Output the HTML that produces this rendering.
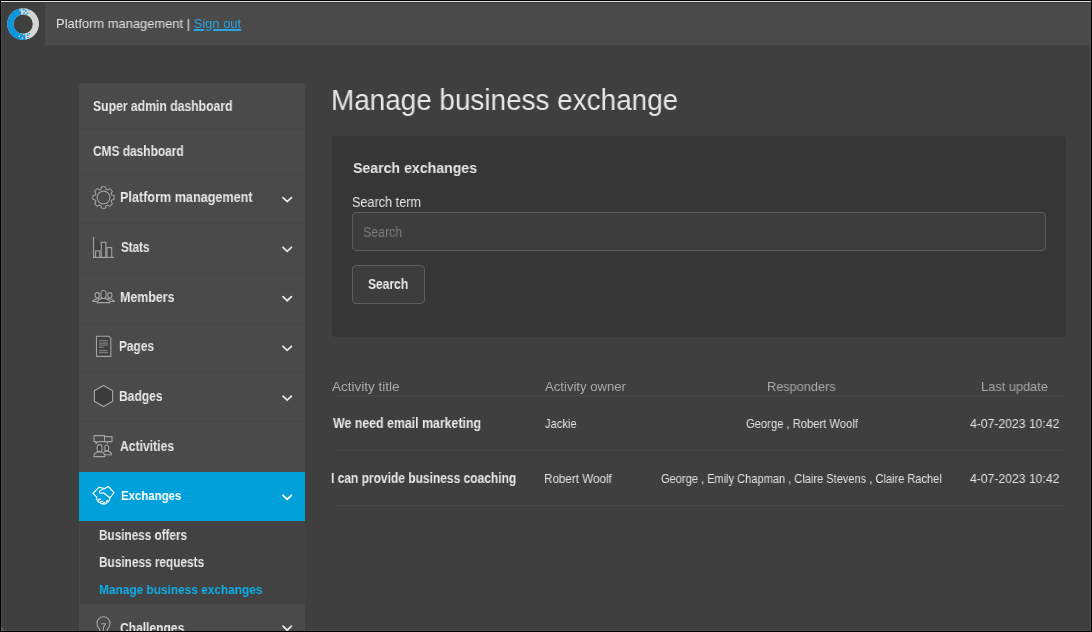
<!DOCTYPE html>
<html><head><meta charset="utf-8">
<style>
html,body{margin:0;padding:0;width:1092px;height:632px;overflow:hidden;background:#000;}
body{position:relative;font-family:"Liberation Sans",sans-serif;color:#e4e4e4;}
.a{position:absolute;}
.t{position:absolute;white-space:nowrap;line-height:1;will-change:transform;}
.b{font-weight:700;}
.sb{font-size:12.5px;font-weight:700;color:#e8e8e8;}
.sep{position:absolute;left:79px;width:226px;height:1px;background:#464646;}
.th{font-size:13px;color:#a9a9a9;}
.td{font-size:12px;color:#e2e2e2;}
.tsep{position:absolute;left:332px;width:734px;height:1px;background:#454545;}
svg.a{overflow:visible;}
</style></head>
<body>
<!-- window background -->
<div class="a" style="left:1px;top:1px;width:1090px;height:630px;background:#3f3f3f;"></div>
<!-- header -->
<div class="a" style="left:45px;top:2px;width:1045px;height:43px;background:#4a4a4a;"></div>
<div class="a" style="left:45px;top:45px;width:1045px;height:1px;background:#444;"></div>
<!-- frame lines -->
<div class="a" style="left:1px;top:1px;width:1090px;height:1px;background:#e3e3e3;"></div>
<div class="a" style="left:1px;top:2px;width:1089px;height:1px;background:#383838;"></div>
<div class="a" style="left:1px;top:2px;width:1px;height:629px;background:#4b4b4b;"></div>
<div class="a" style="left:1090px;top:2px;width:1px;height:629px;background:#4b4b4b;"></div>
<div class="a" style="left:1px;top:630px;width:1090px;height:1px;background:#4b4b4b;"></div>

<!-- logo -->
<svg class="a" style="left:0;top:0" width="46" height="46" viewBox="0 0 46 46">
  <circle cx="23.1" cy="24.1" r="12.8" fill="none" stroke="#d5d5d5" stroke-width="6.2"/>
  <path d="M20.88 11.49 A12.8 12.8 0 0 0 25.32 36.71" fill="none" stroke="#0b95da" stroke-width="6.2"/>
  <g fill="#0b95da">
    <rect x="22.6" y="8.6" width="1.8" height="1.8"/><rect x="25" y="10" width="1.6" height="1.6"/>
    <rect x="23.4" y="12.4" width="1.5" height="1.5"/><rect x="26.8" y="12.6" width="1.4" height="1.4"/>
    <rect x="28.6" y="9.4" width="1.2" height="1.2"/><rect x="25.6" y="14.2" width="1.2" height="1.2"/>
    <rect x="26.8" y="34.4" width="1.6" height="1.6"/><rect x="28.8" y="33.2" width="1.3" height="1.3"/>
    <rect x="27.4" y="37" width="1.3" height="1.3"/>
  </g>
  <g fill="#d5d5d5">
    <rect x="19.4" y="9.6" width="1.3" height="1.3"/><rect x="21" y="13" width="1.2" height="1.2"/>
    <rect x="18.6" y="35.6" width="1.4" height="1.4"/><rect x="21.6" y="37.2" width="1.6" height="1.6"/>
    <rect x="23" y="34" width="1.3" height="1.3"/><rect x="20.4" y="33.2" width="1.1" height="1.1"/>
  </g>
</svg>

<!-- sidebar -->
<div class="a" style="left:79px;top:83px;width:226px;height:548px;background:#4a4a4a;border-radius:4px 4px 0 0;"></div>
<div class="sep" style="top:128px"></div>
<div class="sep" style="top:174px"></div>
<div class="sep" style="top:223px"></div>
<div class="sep" style="top:273px"></div>
<div class="sep" style="top:323px"></div>
<div class="sep" style="top:372px"></div>
<div class="sep" style="top:421px"></div>
<div class="a" style="left:79px;top:472px;width:226px;height:49px;background:#00a0da;"></div>
<div class="a" style="left:79px;top:521px;width:226px;height:83px;background:#424242;"></div>
<div class="a" style="left:79px;top:521px;width:1px;height:83px;background:#474747;"></div>


<!-- chevrons -->
<svg class="a" style="left:0;top:0" width="1092" height="632">
  <g fill="none" stroke="#e6e6e6" stroke-width="1.8" stroke-linecap="round" stroke-linejoin="miter">
    <path d="M283 197.6 L287.2 201.6 L291.4 197.6"/>
    <path d="M283 247.3 L287.2 251.3 L291.4 247.3"/>
    <path d="M283 296.7 L287.2 300.7 L291.4 296.7"/>
    <path d="M283 346.3 L287.2 350.3 L291.4 346.3"/>
    <path d="M283 396.1 L287.2 400.1 L291.4 396.1"/>
    <path d="M283 495.3 L287.2 499.3 L291.4 495.3" stroke="#fff"/>
    <path d="M283 626.2 L287.2 630.2 L291.4 626.2"/>
  </g>
  <!-- gear -->
  <g fill="none" stroke="#a3a3a3" stroke-width="1.1" stroke-linejoin="round">
    <path fill="#454545" d="M111.72 194.99 L114.00 195.46 A10.7 10.7 0 0 1 114.00 199.54 L111.72 200.01 A8.6 8.6 0 0 1 111.09 201.54 L112.37 203.48 A10.7 10.7 0 0 1 109.48 206.37 L107.54 205.09 A8.6 8.6 0 0 1 106.01 205.72 L105.54 208.00 A10.7 10.7 0 0 1 101.46 208.00 L100.99 205.72 A8.6 8.6 0 0 1 99.46 205.09 L97.52 206.37 A10.7 10.7 0 0 1 94.63 203.48 L95.91 201.54 A8.6 8.6 0 0 1 95.28 200.01 L93.00 199.54 A10.7 10.7 0 0 1 93.00 195.46 L95.28 194.99 A8.6 8.6 0 0 1 95.91 193.46 L94.63 191.52 A10.7 10.7 0 0 1 97.52 188.63 L99.46 189.91 A8.6 8.6 0 0 1 100.99 189.28 L101.46 187.00 A10.7 10.7 0 0 1 105.54 187.00 L106.01 189.28 A8.6 8.6 0 0 1 107.54 189.91 L109.48 188.63 A10.7 10.7 0 0 1 112.37 191.52 L111.09 193.46 A8.6 8.6 0 0 1 111.72 194.99 Z"/>
    <circle cx="103.5" cy="197.5" r="6.4" fill="#4a4a4a"/>
  </g>
  <!-- stats -->
  <g fill="none" stroke="#a3a3a3" stroke-width="1.1">
    <path d="M94.2 238 L101.3 244.5 V250.9 H94.2 Z" fill="#404040" stroke="none"/>
    <path d="M93.6 237 V257.4 H113.8"/>
    <rect x="95.6" y="250.9" width="4.2" height="6.5" fill="#424242"/>
    <rect x="101.3" y="242.3" width="4.5" height="15.1" fill="#424242"/>
    <rect x="107" y="247.6" width="4.7" height="9.8" fill="#424242"/>
  </g>
  <!-- members -->
  <g fill="none" stroke="#a3a3a3" stroke-width="1.1">
    <path d="M99.4 298.6 Q93.6 299.2 92.7 301.5 H97.8" fill="#444"/>
    <path d="M107.6 298.6 Q113.4 299.2 114.3 301.5 H109.2" fill="#444"/>
    <ellipse cx="97.2" cy="295.3" rx="2.1" ry="2.7" fill="#424242"/>
    <ellipse cx="109.8" cy="295.3" rx="2.1" ry="2.7" fill="#424242"/>
    <path d="M97.3 302.6 Q97.8 298.4 103.5 298.4 Q109.2 298.4 109.7 302.6 Z" fill="#404040"/>
    <ellipse cx="103.5" cy="294.4" rx="2.6" ry="3.9" fill="#3d3d3d"/>
  </g>
  <!-- pages -->
  <g>
    <path d="M96.5 336.2 H108.8 L110.8 338.2 V356.4 H96.5 Z" fill="#3f3f3f" stroke="#a3a3a3" stroke-width="1.1"/>
    <g fill="#a3a3a3" opacity="0.75">
      <rect x="99" y="340.3" width="9" height="1"/>
      <rect x="99" y="342.6" width="9" height="1"/>
      <rect x="99" y="344.6" width="9" height="1"/>
      <rect x="99" y="346.8" width="4.8" height="1"/>
      <rect x="99" y="350.2" width="8.5" height="1"/>
      <rect x="99" y="352.2" width="9" height="1"/>
    </g>
  </g>
  <!-- badges -->
  <path d="M103.5 385.5 L112.6 390.8 V401.2 L103.5 406.5 L94.4 401.2 V390.8 Z" fill="#3b3b3b" stroke="#a8a8a8" stroke-width="1.1" stroke-linejoin="round"/>
  <!-- activities -->
  <g fill="none" stroke="#a3a3a3" stroke-width="1.1" stroke-linejoin="round">
    <path d="M94 435.6 H104.5 V441.6 H97.8 L96 443.6 V441.6 H94 Z"/>
    <path d="M104.5 436.6 H112 V441.6 H107.5 V443 L106.2 441.6 H104.5"/>
    <ellipse cx="99.6" cy="448.2" rx="2.5" ry="3.6" fill="#3e3e3e"/>
    <ellipse cx="106.7" cy="448" rx="2" ry="3" fill="#3e3e3e"/>
    <path d="M93.8 456.6 Q93.8 452.4 99.4 451.4 Q105 452.4 105 456.6 Z"/>
    <path d="M104 451.8 Q105.5 450.9 106.5 450.9 Q111.6 451.6 111.6 454.8 H105"/>
  </g>
  <!-- exchanges handshake -->
  <g fill="none" stroke="#ffffff" stroke-width="1.15" stroke-linejoin="round" stroke-linecap="round">
    <path d="M96.8 497.2 L92.9 493.3 L98.9 487.3 L104.8 488.5 L108.2 486.4 L114.1 492.6 L109.8 497.8"/>
    <path d="M104.8 488.5 Q100.2 489.8 99.3 492 Q99.4 494 103.4 492.8 L109.8 497.8"/>
    <path d="M96.8 497.2 Q95.4 499.6 97.8 500.2 Q97.6 502.4 100.2 502.4 Q100.6 504.2 103.2 503.8 Q105.8 504.6 106.8 502.2 Q109.6 501.8 109.8 497.8"/>
    <path d="M97.8 500.2 Q99.2 498.6 100.6 499.4 M100.2 502.4 Q101.4 500.8 102.8 501.6 M103.2 503.8 Q103.8 502.4 104.8 502.4 M106.8 502.2 Q106 500.8 107.6 500.4"/>
  </g>
  <!-- challenges bulb -->
  <g fill="none" stroke="#a3a3a3" stroke-width="1.1">
    <path d="M100.2 631 Q99.6 629 97.8 626.6 Q97 625 97 623.2 A6.5 6.5 0 0 1 110 623.2 Q110 625 109.2 626.6 Q107.4 629 106.8 631"/>
    <path d="M101.2 623.8 H105.6 L103.4 627.4 V631"/>
  </g>
</svg>

<!-- main -->

<div class="a" style="left:332px;top:136px;width:734px;height:201px;background:#363636;border-radius:4px;"></div>
<div class="a" style="left:352px;top:212px;width:692px;height:37px;background:#3d3d3d;border:1px solid #5c5c5c;border-radius:4px;"></div>
<div class="a" style="left:352px;top:265px;width:71px;height:37px;background:#3d3d3d;border:1px solid #5e5e5e;border-radius:4px;"></div>

<!-- table -->

<div class="tsep" style="top:395px"></div>
<div class="tsep" style="top:450px"></div>
<div class="tsep" style="top:505px"></div>
<div class="t" style="left:55.61px;top:17px;font-size:13px;font-weight:400;color:#e2e2e2;transform:scaleX(0.9941);transform-origin:0 0;">Platform management | <span style="color:#27a6e2;text-decoration:underline;text-decoration-thickness:1.5px;text-underline-offset:1px;">Sign out</span></div>
<div class="t" style="left:331.28px;top:86px;font-size:29px;font-weight:400;color:#e6e6e6;transform:scaleX(0.9612);transform-origin:0 0;">Manage business exchange</div>
<div class="t" style="left:352.75px;top:160px;font-size:15px;font-weight:700;color:#e6e6e6;transform:scaleX(0.9413);transform-origin:0 0;">Search exchanges</div>
<div class="t" style="left:351.85px;top:195px;font-size:14px;font-weight:400;color:#e4e4e4;transform:scaleX(0.9047);transform-origin:0 0;">Search term</div>
<div class="t" style="left:363.32px;top:225px;font-size:14px;font-weight:400;color:#7c7c7c;transform:scaleX(0.8837);transform-origin:0 0;">Search</div>
<div class="t" style="left:368.20px;top:277px;font-size:14px;font-weight:700;color:#ebebeb;transform:scaleX(0.8587);transform-origin:0 0;">Search</div>
<div class="t" style="left:332.40px;top:380px;font-size:13px;font-weight:400;color:#a9a9a9;transform:scaleX(1.0400);transform-origin:0 0;">Activity title</div>
<div class="t" style="left:545.40px;top:380px;font-size:13px;font-weight:400;color:#a9a9a9;transform:scaleX(1.0100);transform-origin:0 0;">Activity owner</div>
<div class="t" style="left:767.02px;top:380px;font-size:13px;font-weight:400;color:#a9a9a9;transform:scaleX(0.9797);transform-origin:0 0;">Responders</div>
<div class="t" style="left:981.01px;top:380px;font-size:13px;font-weight:400;color:#a9a9a9;transform:scaleX(0.9851);transform-origin:0 0;">Last update</div>
<div class="t" style="left:332.70px;top:416px;font-size:14px;font-weight:700;color:#e8e8e8;transform:scaleX(0.8820);transform-origin:0 0;">We need email marketing</div>
<div class="t" style="left:545.40px;top:417px;font-size:13px;font-weight:400;color:#e2e2e2;transform:scaleX(0.8622);transform-origin:0 0;">Jackie</div>
<div class="t" style="left:745.60px;top:417px;font-size:13px;font-weight:400;color:#e2e2e2;transform:scaleX(0.8623);transform-origin:0 0;">George , Robert Woolf</div>
<div class="t" style="left:970.00px;top:417px;font-size:13px;font-weight:400;color:#e2e2e2;transform:scaleX(0.9368);transform-origin:0 0;">4-07-2023 10:42</div>
<div class="t" style="left:331.04px;top:471px;font-size:14px;font-weight:700;color:#e8e8e8;transform:scaleX(0.8563);transform-origin:0 0;">I can provide business coaching</div>
<div class="t" style="left:543.90px;top:472px;font-size:13px;font-weight:400;color:#e2e2e2;transform:scaleX(0.8960);transform-origin:0 0;">Robert Woolf</div>
<div class="t" style="left:661.00px;top:472px;font-size:13px;font-weight:400;color:#e2e2e2;transform:scaleX(0.8503);transform-origin:0 0;">George , Emily Chapman , Claire Stevens , Claire Rachel</div>
<div class="t" style="left:970.00px;top:472px;font-size:13px;font-weight:400;color:#e2e2e2;transform:scaleX(0.9368);transform-origin:0 0;">4-07-2023 10:42</div>
<div class="t" style="left:93.00px;top:99px;font-size:14px;font-weight:700;color:#e8e8e8;transform:scaleX(0.8706);transform-origin:0 0;">Super admin dashboard</div>
<div class="t" style="left:93.00px;top:144px;font-size:14px;font-weight:700;color:#e8e8e8;transform:scaleX(0.8509);transform-origin:0 0;">CMS dashboard</div>
<div class="t" style="left:119.85px;top:190px;font-size:14px;font-weight:700;color:#e8e8e8;transform:scaleX(0.9017);transform-origin:0 0;">Platform management</div>
<div class="t" style="left:120.50px;top:240px;font-size:14px;font-weight:700;color:#e8e8e8;transform:scaleX(0.8294);transform-origin:0 0;">Stats</div>
<div class="t" style="left:120.01px;top:290px;font-size:14px;font-weight:700;color:#e8e8e8;transform:scaleX(0.8850);transform-origin:0 0;">Members</div>
<div class="t" style="left:119.45px;top:339px;font-size:14px;font-weight:700;color:#e8e8e8;transform:scaleX(0.8475);transform-origin:0 0;">Pages</div>
<div class="t" style="left:119.44px;top:389px;font-size:14px;font-weight:700;color:#e8e8e8;transform:scaleX(0.8612);transform-origin:0 0;">Badges</div>
<div class="t" style="left:120.00px;top:439px;font-size:14px;font-weight:700;color:#e8e8e8;transform:scaleX(0.8677);transform-origin:0 0;">Activities</div>
<div class="t" style="left:120.70px;top:489px;font-size:13.5px;font-weight:700;color:#ffffff;transform:scaleX(0.8465);transform-origin:0 0;">Exchanges</div>
<div class="t" style="left:98.96px;top:528px;font-size:14px;font-weight:700;color:#e8e8e8;transform:scaleX(0.8385);transform-origin:0 0;">Business offers</div>
<div class="t" style="left:98.96px;top:555px;font-size:14px;font-weight:700;color:#e8e8e8;transform:scaleX(0.8439);transform-origin:0 0;">Business requests</div>
<div class="t" style="left:99.00px;top:583px;font-size:13.5px;font-weight:700;color:#0eaeea;transform:scaleX(0.8785);transform-origin:0 0;">Manage business exchanges</div>
<div class="t" style="left:120.30px;top:620.5px;font-size:14px;font-weight:700;color:#e8e8e8;transform:scaleX(0.8600);transform-origin:0 0;">Challenges</div>
<svg class="a" style="left:0;top:0" width="12" height="632"><path d="M1 625.2 Q1.8 630.2 6.8 631 H1 Z" fill="#585d63"/></svg>
<!-- outer black frame on top -->
<div class="a" style="left:0;top:0;width:1092px;height:1px;background:#000;"></div>
<div class="a" style="left:0;top:0;width:1px;height:632px;background:#000;"></div>
<div class="a" style="left:1091px;top:0;width:1px;height:632px;background:#000;"></div>
<div class="a" style="left:0;top:631px;width:1092px;height:1px;background:#000;"></div>
</body></html>
